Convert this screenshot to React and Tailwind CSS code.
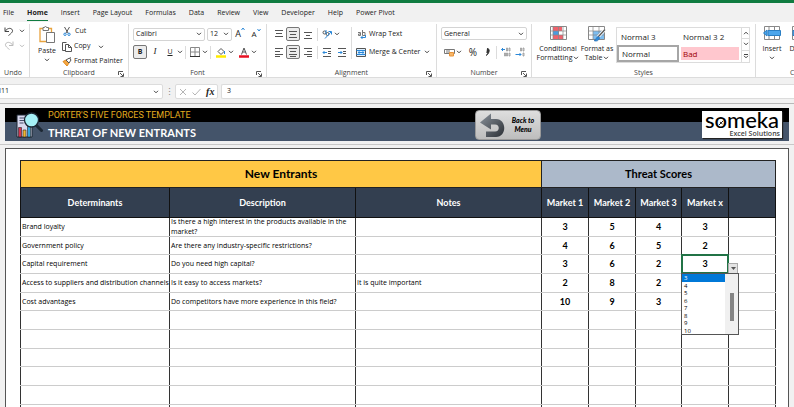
import React from "react";

const TABS = ["File", "Home", "Insert", "Page Layout", "Formulas", "Data", "Review", "View", "Developer", "Help", "Power Pivot"];

const ROWS = [
  ["Brand loyalty", "Is there a high interest in the products available in the market?", "", "3", "5", "4", "3"],
  ["Government policy", "Are there any industry-specific restrictions?", "", "4", "6", "5", "2"],
  ["Capital requirement", "Do you need high capital?", "", "3", "6", "2", "3"],
  ["Access to suppliers and distribution channels", "Is it easy to access markets?", "It is quite important", "2", "8", "2", ""],
  ["Cost advantages", "Do competitors have more experience in this field?", "", "10", "9", "3", ""],
  ...Array.from({ length: 6 }, () => ["", "", "", "", "", "", ""]),
];

const OPTIONS = ["3", "4", "5", "6", "7", "8", "9", "10"];

function Chevron({ className = "text-[#444]" }) {
  return (
    <svg viewBox="0 0 6 4" className={`h-[4px] w-[6px] shrink-0 ${className}`} fill="none" stroke="currentColor" aria-hidden="true">
      <path d="M1 .8 3 2.8 5 .8" />
    </svg>
  );
}

function Svg({ w = 10, h = 10, children }) {
  return (
    <svg width={w} height={h} viewBox={`0 0 ${w} ${h}`} fill="none" stroke="#555" className="shrink-0" aria-hidden="true">
      {children}
    </svg>
  );
}

function IconButton({ label, active, children, className = "" }) {
  return (
    <button
      type="button"
      aria-label={label}
      className={`flex h-[14px] min-w-[14px] items-center justify-center gap-1 rounded-[2px] ${active ? "border border-[#777] bg-[#ececec]" : ""} ${className}`}
    >
      {children}
    </button>
  );
}

function Group({ label, launcher, className, children }) {
  return (
    <section aria-label={label} className={`flex h-[53px] shrink-0 flex-col border-r border-[#dcdcdc] ${className}`}>
      <div className="h-[45px]">{children}</div>
      <div className="relative flex h-[8px] items-center justify-center leading-[8px] text-[#444]">
        {label}
        {launcher && (
          <button type="button" aria-label={`${label} settings`} className="absolute right-1 top-[2px]">
            <Svg w={6} h={6}>
              <path d="M.5 4V.5H5M2 2l3 3M5.500 2.500v3h-3" />
            </Svg>
          </button>
        )}
      </div>
    </section>
  );
}

function Divider() {
  return <span className="mx-[2px] h-[13px] w-px bg-[#dcdcdc]" />;
}

function Lines({ xs }) {
  return (
    <Svg w={10} h={9}>
      {xs.map(([a, b, y]) => (
        <path key={y} d={`M${a} ${y}H${b}`} />
      ))}
    </Svg>
  );
}

function ComboBox({ label, value, className }) {
  return (
    <label className={`flex h-[13px] items-center rounded-[2px] border border-[#d4d4d4] bg-white pr-[2px] ${className}`}>
      <select aria-label={label} defaultValue={value} className="min-w-0 flex-1 appearance-none bg-transparent pl-[2px] leading-[10px] outline-none">
        <option>{value}</option>
      </select>
      <Chevron />
    </label>
  );
}

function UndoGroup() {
  return (
    <Group label="Undo" className="w-[30px] pr-[3px]">
      <div className="flex h-[14px] items-center gap-[5px] pl-1">
        <button type="button" aria-label="Undo">
          <Svg w={10} h={9}>
            <path d="M1 .5v4h4M1.200 4.200C3 1.500 6 .500 7.800 2.200c2 2-.300 4-3.300 6.300" stroke="#444" />
          </Svg>
        </button>
        <Chevron />
      </div>
      <div className="flex h-[15px] items-center gap-[5px] pl-1">
        <button type="button" aria-label="Redo">
          <Svg w={10} h={9}>
            <path d="M9 .5v4H5M8.800 4.200C7 1.500 4 .500 2.200 2.200c-2 2 .300 4 3.300 6.300" stroke="#bbb" />
          </Svg>
        </button>
        <Chevron className="text-[#bbb]" />
      </div>
    </Group>
  );
}

function ClipboardGroup() {
  return (
    <Group label="Clipboard" launcher className="w-[99px]">
      <div className="flex">
        <button type="button" className="ml-[8px] mt-[2px] flex w-[18px] flex-col items-center">
          <Svg w={16} h={18}>
            <path d="M7 15.500H1v-13h3M9 2.500h3.500V7" stroke="#e8a33d" strokeWidth="1.300" />
            <path d="M4 1.500h1.500a1 1 0 0 1 2 0H9.500v3H4z" fill="#fff" stroke="#777" />
            <path d="M7.500 6.500h8v10h-8z" fill="#fff" stroke="#777" />
          </Svg>
          <span className="mt-[2px] leading-[9px]">Paste</span>
          <span className="mt-[3px]"><Chevron /></span>
        </button>
        <div className="ml-[6px] flex flex-col">
          <button type="button" className="flex h-[15px] items-center gap-1 pl-px">
            <Svg w={8} h={9}>
              <path d="M1.500 0 5 6M6.500 0 3 6" stroke="#555" />
              <circle cx="2" cy="7.300" r="1.200" stroke="#2b88d8" />
              <circle cx="6" cy="7.300" r="1.200" stroke="#2b88d8" />
            </Svg>
            Cut
          </button>
          <button type="button" className="flex h-[15px] items-center gap-[2px]">
            <Svg w={10} h={10}>
              <path d="M3 8.500H.5v-8h4" />
              <path d="M3.500 2.500h3l3 3v4h-6zM6.500 2.500v3h3" fill="#fff" />
            </Svg>
            Copy
            <span className="ml-[6px]"><Chevron /></span>
          </button>
          <button type="button" className="flex h-[15px] items-center gap-[2px] whitespace-nowrap">
            <Svg w={10} h={10}>
              <path d="M1 4.500 5 9l2-3-3-3z" fill="#f5a742" stroke="#e08a1e" />
              <path d="M4 3l3 3 2-3-1.500-2zM7.500 1.500 9 .5" fill="#fff" stroke="#555" />
            </Svg>
            Format Painter
          </button>
        </div>
      </div>
    </Group>
  );
}

function FontGroup() {
  return (
    <Group label="Font" launcher className="w-[138px]">
      <div className="ml-1 mt-[3px] flex items-center">
        <ComboBox label="Font name" value="Calibri" className="w-[72px]" />
        <ComboBox label="Font size" value="12" className="ml-[2px] w-[25px]" />
        <IconButton label="Increase font size" className="ml-px text-[9px]">
          <span className="flex">A<Svg w={4} h={4}><path d="M.5 3 2 1l1.500 2" stroke="#2b88d8" /></Svg></span>
        </IconButton>
        <IconButton label="Decrease font size" className="ml-[2px] text-[8px]">
          <span className="flex">A<Svg w={4} h={4}><path d="M.5 1 2 3l1.500-2" stroke="#2b88d8" /></Svg></span>
        </IconButton>
      </div>
      <div className="ml-1 mt-[4px] flex items-center">
        <IconButton label="Bold" active className="font-bold">B</IconButton>
        <IconButton label="Italic" className="ml-px font-['Liberation_Serif',serif] text-[9px] italic">I</IconButton>
        <IconButton label="Underline" className="ml-px underline">U</IconButton>
        <Chevron />
        <Divider />
        <IconButton label="Borders">
          <Svg w={10} h={10}>
            <path d="M.5 .5h9v9h-9zM5 0v10M0 5h10" stroke="#888" />
            <path d="M0 9.500h10" stroke="#333" />
          </Svg>
        </IconButton>
        <Chevron />
        <Divider />
        <IconButton label="Fill color" className="ml-px">
          <Svg w={10} h={11}>
            <path d="M2 4.500 5 1.500l3 3-3 3z" fill="#fff" />
            <path d="M8.500 4v3" stroke="#2b88d8" />
            <path d="M0 9.500h10" stroke="#ffeb00" strokeWidth="2.500" />
          </Svg>
        </IconButton>
        <Chevron />
        <IconButton label="Font color" className="ml-[3px]">
          <Svg w={10} h={11}>
            <path d="M2.500 7.500 5 1l2.500 6.500M3.500 5h3" />
            <path d="M0 9.500h10" stroke="#e81123" strokeWidth="2.500" />
          </Svg>
        </IconButton>
        <Chevron />
      </div>
    </Group>
  );
}

function AlignmentGroup() {
  return (
    <Group label="Alignment" launcher className="w-[170px]">
      <div className="flex">
        <div className="ml-[5px] mt-[3px] flex flex-col gap-[4px]">
          <div className="flex h-[14px] items-center">
            <IconButton label="Top align"><Lines xs={[[1, 9, 0.5], [2, 8, 3.5], [1, 9, 6.5]]} /></IconButton>
            <IconButton label="Middle align" active><Lines xs={[[1, 9, 1.5], [2, 8, 4.5], [1, 9, 7.5]]} /></IconButton>
            <IconButton label="Bottom align" className="ml-px"><Lines xs={[[1, 9, 2.5], [3, 7, 5.5], [1, 9, 8.5]]} /></IconButton>
            <Divider />
            <IconButton label="Orientation">
              <Svg w={10} h={10}>
                <circle cx="2.500" cy="3.500" r="1.500" />
                <circle cx="5.500" cy="5" r="1.500" />
                <path d="M4 1v4M3 9.500 9 3M6.500 2.500H9.500v3" stroke="#2b88d8" />
              </Svg>
            </IconButton>
            <Chevron />
          </div>
          <div className="flex h-[14px] items-center">
            <IconButton label="Align left"><Lines xs={[[1, 9, 0.5], [1, 6, 3.5], [1, 9, 6.5], [1, 6, 8.5]]} /></IconButton>
            <IconButton label="Center" active><Lines xs={[[1, 9, 0.5], [2, 8, 3.5], [1, 9, 6.5], [2, 8, 8.5]]} /></IconButton>
            <IconButton label="Align right" className="ml-px"><Lines xs={[[1, 9, 0.5], [4, 9, 3.5], [1, 9, 6.5], [4, 9, 8.5]]} /></IconButton>
            <Divider />
            <IconButton label="Decrease indent">
              <Svg w={10} h={9}><path d="M1 .5h8M6 3.500h3M6 5.500h3M1 8.500h8" /><path d="M5 4.500H1M2.500 3 1 4.500 2.500 6" stroke="#2b88d8" /></Svg>
            </IconButton>
            <IconButton label="Increase indent" className="ml-px">
              <Svg w={10} h={9}><path d="M1 .5h8M6 3.500h3M6 5.500h3M1 8.500h8" /><path d="M1 4.500h4M3.500 3 5 4.500 3.500 6" stroke="#2b88d8" /></Svg>
            </IconButton>
          </div>
        </div>
        <div className="ml-[2px] mt-[3px] flex flex-col gap-[4px] border-l border-[#dcdcdc] pl-[4px]">
          <button type="button" className="flex h-[14px] items-center gap-[3px] whitespace-nowrap pl-px">
            <Svg w={9} h={10}>
              <path d="M1 3.500h2.500v3H1.500v-1.500H3.500M5.500 1v5.500H8v-3H5.500" stroke="#777" />
              <path d="M8.500 6v2.500H4M5.500 7 4 8.500 5.500 10" stroke="#2b88d8" />
            </Svg>
            Wrap Text
          </button>
          <button type="button" className="flex h-[14px] items-center gap-[3px] whitespace-nowrap">
            <Svg w={10} h={9}>
              <path d="M.5 .5h9v8h-9z" fill="#dcefff" stroke="#555" />
              <path d="M.5 2.500h9M.5 6.500h9M2 4.500h6M3.500 3.500l-1.500 1 1.500 1M6.500 3.500l1.500 1-1.500 1" stroke="#2b88d8" />
            </Svg>
            Merge &amp; Center
            <span className="ml-px"><Chevron /></span>
          </button>
        </div>
      </div>
    </Group>
  );
}

function NumberGroup() {
  return (
    <Group label="Number" launcher className="w-[95px]">
      <div className="ml-1 mt-[3px]">
        <ComboBox label="Number format" value="General" className="w-[86px]" />
      </div>
      <div className="ml-[5px] mt-[5px] flex items-center">
        <IconButton label="Accounting format">
          <Svg w={11} h={9}>
            <path d="M.5 1.500h10v4H.5zM3 2v3M5 2v3" stroke="#777" />
            <path d="M5.500 4.500h4v3.500h-4z" fill="#f7b76b" stroke="#e8943a" />
          </Svg>
        </IconButton>
        <Chevron />
        <IconButton label="Percent style" className="ml-[4px] text-[10px]">%</IconButton>
        <IconButton label="Comma style">
          <Svg w={6} h={8}><path d="M3 .5a2 2 0 1 1-.5 3.900M5 2.500C5 5 4 6.500 2 7.500" fill="#333" stroke="#333" /></Svg>
        </IconButton>
        <Divider />
        <IconButton label="Increase decimal">
          <Svg w={10} h={10}><path d="M5.500 1h1v3h-1zM8 1h1v3H8zM3.500 6h1v3h-1zM5.500 6h1v3h-1zM8 6h1v3H8z" stroke="#888" strokeWidth=".7" /><path d="M4 2.500H.5M2 1 .5 2.500 2 4" stroke="#2b88d8" /></Svg>
        </IconButton>
        <IconButton label="Decrease decimal">
          <Svg w={10} h={10}><path d="M5.500 1h1v3h-1zM8 1h1v3H8zM8 6h1v3H8z" stroke="#888" strokeWidth=".7" /><path d="M.5 7.500H6M4.500 6 6 7.500 4.500 9" stroke="#2b88d8" /></Svg>
        </IconButton>
      </div>
    </Group>
  );
}

function StylesGroup() {
  return (
    <Group label="Styles" className="w-[224px]">
      <div className="flex">
        <button type="button" className="ml-[6px] mt-[2px] flex w-[40px] flex-col items-center leading-[9px]">
          <Svg w={17} h={14}>
            <path d="M.5 .5h16v13H.5z" fill="#fff" stroke="#888" />
            <path d="M3 1h9v4H3zM3 9h10v4H3z" fill="#f0626c" stroke="none" />
            <path d="M3 5h6v4H3z" fill="#4a9be0" stroke="none" />
            <path d="M.5 5h16M.5 9h16M3 .5v13M8.500 .5v13M13 .5v13" stroke="#888" strokeWidth=".7" />
          </Svg>
          <span className="mt-[4px]">Conditional</span>
          <span className="flex items-center gap-px whitespace-nowrap">Formatting <Chevron /></span>
        </button>
        <button type="button" className="ml-[2px] mt-[2px] flex w-[34px] flex-col items-center leading-[9px]">
          <Svg w={18} h={16}>
            <path d="M.5 .5h16v13H.5z" fill="#fff" stroke="#888" />
            <path d="M5 5h11v8H5z" fill="#7dbdf0" stroke="none" />
            <path d="M.5 5h16M.5 9h16M5 .5v13M11 .5v13" stroke="#888" strokeWidth=".7" />
            <path d="M17 3.500 10 11" stroke="#fff" strokeWidth="3" />
            <path d="M17 3.500 10 11" stroke="#555" strokeWidth="1.300" />
            <path d="M10.500 10.500c-2 0-2 3-4.500 4 2 1.500 5.500 0 5.500-3z" fill="#2b88d8" stroke="#2b6fb0" strokeWidth=".7" />
          </Svg>
          <span className="mt-[2px] whitespace-nowrap">Format as</span>
          <span className="flex items-center gap-px">Table <Chevron /></span>
        </button>
        <div className="ml-[2px] mt-[3px] flex h-[36px] border border-[#dcdcdc]">
          <div className="grid w-[124px] grid-cols-2 grid-rows-2 text-left text-[8px]">
            <button type="button" className="px-1 text-left">Normal 3</button>
            <button type="button" className="px-1 text-left">Normal 3 2</button>
            <button type="button" className="border-2 border-[#a6a6a6] px-[3px] text-left">Normal</button>
            <button type="button" className="m-[2px] bg-[#ffc7ce] px-[2px] text-left text-[#9c0006]">Bad</button>
          </div>
          <div className="grid w-[8px] grid-rows-3 divide-y divide-[#dcdcdc] border-l border-[#dcdcdc]">
            <button type="button" aria-label="Scroll up" className="flex items-center justify-center"><span className="flex rotate-180"><Chevron /></span></button>
            <button type="button" aria-label="Scroll down" className="flex items-center justify-center"><Chevron /></button>
            <button type="button" aria-label="More styles" className="flex flex-col items-center justify-center">
              <span className="h-px w-[4px] bg-[#444]" />
              <Chevron />
            </button>
          </div>
        </div>
      </div>
    </Group>
  );
}

function CellsGroup() {
  return (
    <section aria-label="Cells" className="flex h-[53px] shrink-0 flex-col">
      <div className="flex h-[45px] gap-[7px] pl-[6px] pt-[2px]">
        <button type="button" className="flex w-[20px] flex-col items-center">
          <Svg w={18} h={14}>
            <path d="M1.500 .5h15v13h-15zM6 .5v13M11.500 .5v13" fill="#fff" stroke="#888" />
            <path d="M5 4.500h12.500v5H5z" fill="#4ca6ec" stroke="#2b7fc4" />
            <path d="M.5 7 4 4v6z" fill="#4ca6ec" stroke="#2b7fc4" />
          </Svg>
          <span className="mt-[4px] leading-[9px]">Insert</span>
          <span className="mt-[3px]"><Chevron /></span>
        </button>
        <button type="button" className="flex w-[22px] flex-col items-center">
          <Svg w={18} h={14}>
            <path d="M1.500 .5h15v13h-15zM6 .5v13M11.500 .5v13" fill="#fff" stroke="#888" />
            <path d="M2 4.500h12v5H2z" fill="#4ca6ec" stroke="#2b7fc4" />
          </Svg>
          <span className="mt-[4px] leading-[9px]">Delete</span>
          <span className="mt-[3px]"><Chevron /></span>
        </button>
      </div>
      <div className="pl-[34px] leading-[8px] text-[#444]">Cells</div>
    </section>
  );
}

function FormulaBar() {
  return (
    <div className="flex h-[15px] items-stretch gap-[3px]">
      <label className="-ml-1 flex w-[167px] shrink-0 items-center rounded-[2px] border border-[#dcdcdc] bg-white pr-[3px]">
        <input aria-label="Name box" defaultValue="I11" className="min-w-0 flex-1 bg-transparent pl-[2px] outline-none" />
        <Chevron />
      </label>
      <span className="flex w-[6px] items-center justify-center text-[9px] text-[#888]">⋮</span>
      <div className="flex w-[43px] shrink-0 items-center justify-around rounded-[2px] border border-[#dcdcdc] bg-white">
        <button type="button" aria-label="Cancel"><Svg w={8} h={8}><path d="M1 1l6 6M7 1 1 7" stroke="#b5b5b5" /></Svg></button>
        <button type="button" aria-label="Enter"><Svg w={9} h={8}><path d="M.5 4.500 3 7l5.500-6" stroke="#b5b5b5" /></Svg></button>
        <button type="button" aria-label="Insert function" className="font-['Liberation_Serif',serif] text-[10px] font-bold italic leading-[10px]">fx</button>
      </div>
      <input aria-label="Formula" defaultValue="3" className="min-w-0 flex-1 rounded-l-[2px] border border-r-0 border-[#dcdcdc] bg-white pl-[5px] outline-none" />
    </div>
  );
}

function Banner() {
  return (
    <header className="mx-[5px] flex h-[33px] items-start bg-[linear-gradient(#000_14px,#44546a_14px)] pl-[11px] pr-[7px]">
      <svg width="27" height="27" viewBox="0 0 27 27" className="mt-[4px] shrink-0" aria-hidden="true">
        <path d="M1 3h15v22H1z" fill="#d9d9ee" stroke="#1c2733" />
        <path d="M3.500 6h5M3.500 8.500h5M3.500 11h4" stroke="#444b66" />
        <path d="M2.500 15.500h3V25h-3z" fill="#d3344f" stroke="#222" strokeWidth=".6" />
        <path d="M7 18h3v7H7z" fill="#f2b632" stroke="#222" strokeWidth=".6" />
        <path d="M11.500 14h3v11h-3z" fill="#35a7dc" stroke="#222" strokeWidth=".6" />
        <path d="m20 13 5.500 5.500" stroke="#1c2733" strokeWidth="3" strokeLinecap="round" />
        <circle cx="15.500" cy="8" r="7" fill="#a5f0f5" stroke="#1c2733" strokeWidth="1.300" />
      </svg>
      <div className="ml-[5px] min-w-0 flex-1">
        <p className="font-['Roboto',sans-serif] text-[9px] leading-[15px] text-[#e3ac1f]">PORTER&apos;S FIVE FORCES TEMPLATE</p>
        <h1 className="text-[11px] font-bold leading-[20px] text-white">THREAT OF NEW ENTRANTS</h1>
      </div>
      <button
        type="button"
        className="mt-[2px] flex h-[30px] w-[66px] shrink-0 items-center rounded-[4px] border border-[#9a9a9a] bg-[linear-gradient(#dedede,#bdbdbd)] pl-[4px] text-[7px] font-black italic leading-[9px]"
      >
        <svg width="26" height="25" viewBox="0 0 26 25" className="shrink-0" aria-hidden="true">
          <defs>
            <linearGradient id="arrow" x1="0" y1="0" x2="1" y2="1">
              <stop offset="0" stopColor="#8a929b" />
              <stop offset="1" stopColor="#2c3036" />
            </linearGradient>
          </defs>
          <path d="M0 9.500 11 .5V6h5c11 0 11 18 0 18H6v-5.500h9c5 0 5-7 0-7h-4v5z" fill="url(#arrow)" />
        </svg>
        <span className="flex-1 text-center">Back to<br />Menu</span>
      </button>
      <div className="ml-[161px] mt-[3px] flex h-[27px] w-[80px] shrink-0 flex-col items-center bg-white shadow-[1px_1px_1px_#222]">
        <span className="h-[19px] text-[22px] font-medium leading-[18px] text-black">
          s
          <span className="relative">
            o
            <svg viewBox="0 0 6 6" className="absolute bottom-[7px] left-[4px] h-[6px] w-[6px]" aria-hidden="true">
              <path d="M1 5 5 1M2 2l2.500 2" stroke="#222" fill="none" />
            </svg>
          </span>
          meka
        </span>
        <span className="self-end pr-[2px] font-['Open_Sans',sans-serif] text-[7px] font-semibold leading-[7px] text-[#444]">Excel Solutions</span>
      </div>
    </header>
  );
}

function OpenDropdown() {
  return (
    <>
      <span className="pointer-events-none absolute -inset-px z-10 border-2 border-[#217346]" />
      <button type="button" aria-label="Open list" className="absolute -bottom-px left-full z-10 flex h-[11px] w-[10px] items-center justify-center border border-[#aaa] bg-[#e4e4e4]">
        <svg viewBox="0 0 5 3" className="h-[3px] w-[5px]" aria-hidden="true"><path d="M0 0h5L2.500 3z" fill="#555" /></svg>
      </button>
      <div className="absolute -left-px top-full z-10 flex h-[62px] w-[58px] border border-[#555] bg-white">
        <ul role="listbox" aria-label="Score" className="grid flex-1 grid-rows-8 text-left font-['Open_Sans',sans-serif] text-[6px] font-normal leading-[8px]">
          {OPTIONS.map((o) => (
            <li key={o} role="option" aria-selected={o === "3"} className="h-0 min-h-full pl-[2px] aria-selected:bg-[#0078d7] aria-selected:text-white">
              {o}
            </li>
          ))}
        </ul>
        <div className="flex w-[13px] justify-center bg-[#f0f0f0] pt-[19px]">
          <span className="h-[28px] w-[4px] bg-[#858585]" />
        </div>
      </div>
    </>
  );
}

function ScoreTable() {
  return (
    <table className="w-full table-fixed border-collapse border border-[#222]">
      <colgroup>
        <col className="w-[149px]" />
        <col className="w-[186px]" />
        <col className="w-[186px]" />
        <col className="w-[47px]" />
        <col className="w-[47px]" />
        <col className="w-[46px]" />
        <col className="w-[47px]" />
        <col className="w-[47px]" />
      </colgroup>
      <thead>
        <tr className="h-[27px]">
          <th colSpan={3} className="border border-[#222] bg-[#ffc845] text-[12px] leading-[16px]">New Entrants</th>
          <th colSpan={5} className="border border-[#222] bg-[#acb9ca] text-[11px] leading-[16px]">Threat Scores</th>
        </tr>
        <tr className="h-[30px] bg-[#333f50] text-[9px] leading-[12px] text-white">
          {["Determinants", "Description", "Notes", "Market 1", "Market 2", "Market 3", "Market x", ""].map((h, i) => (
            <th key={i} className="whitespace-nowrap border border-[#111]">{h}</th>
          ))}
        </tr>
      </thead>
      <tbody>
        {ROWS.map((row, r) => (
          <tr key={r} className="h-[19px] nth-[3n+2]:h-[18px]">
            {[...row, ""].map((cell, c) =>
              c < 3 ? (
                <td key={c} className={`border border-x-[#333] border-y-[#ccc] p-0 ${c === 0 ? "whitespace-nowrap" : ""}`}>
                  <div className="flex h-[17px] items-center pl-px font-['Open_Sans',sans-serif] text-[7px] leading-[10px]">{cell}</div>
                </td>
              ) : (
                <td key={c} className="relative border border-x-[#333] border-y-[#ccc] p-0 text-center text-[9px] font-bold leading-[12px]">
                  {cell}
                  {r === 2 && c === 6 && <OpenDropdown />}
                </td>
              )
            )}
          </tr>
        ))}
      </tbody>
    </table>
  );
}

export default function App() {
  return (
    <div className="flex h-screen flex-col overflow-hidden bg-[#f1f1f1] font-['Open_Sans',sans-serif] text-[7px] text-[#222]">
      <div className="h-[3px] shrink-0 bg-[#107c41]" />
      <nav className="flex h-[19px] shrink-0 items-center gap-[13px] pl-[3px]">
        {TABS.map((t) => (
          <button key={t} type="button" className={`h-[16px] whitespace-nowrap pt-[2px] ${t === "Home" ? "border-b border-[#107c41] font-bold" : ""}`}>
            {t}
          </button>
        ))}
      </nav>
      <div className="flex h-[56px] shrink-0 overflow-hidden border-b border-[#dcdcdc] bg-white pt-[2px]">
        <UndoGroup />
        <ClipboardGroup />
        <FontGroup />
        <AlignmentGroup />
        <NumberGroup />
        <StylesGroup />
        <CellsGroup />
      </div>
      <div className="shrink-0 border-b border-[#b8b8b8] pb-[4px] pt-[6px]">
        <FormulaBar />
      </div>
      <main className="flex min-h-0 flex-1 flex-col pt-[4px] font-['Lato',sans-serif] text-black">
        <Banner />
        <div className="mt-[3px] shrink-0 border-t border-[#c8c8c8]" />
        <div className="mx-[5px] mt-[3px] min-h-0 flex-1 overflow-hidden border border-b-0 border-[#555] bg-white px-[14px] pt-[11px]">
          <ScoreTable />
        </div>
      </main>
    </div>
  );
}
